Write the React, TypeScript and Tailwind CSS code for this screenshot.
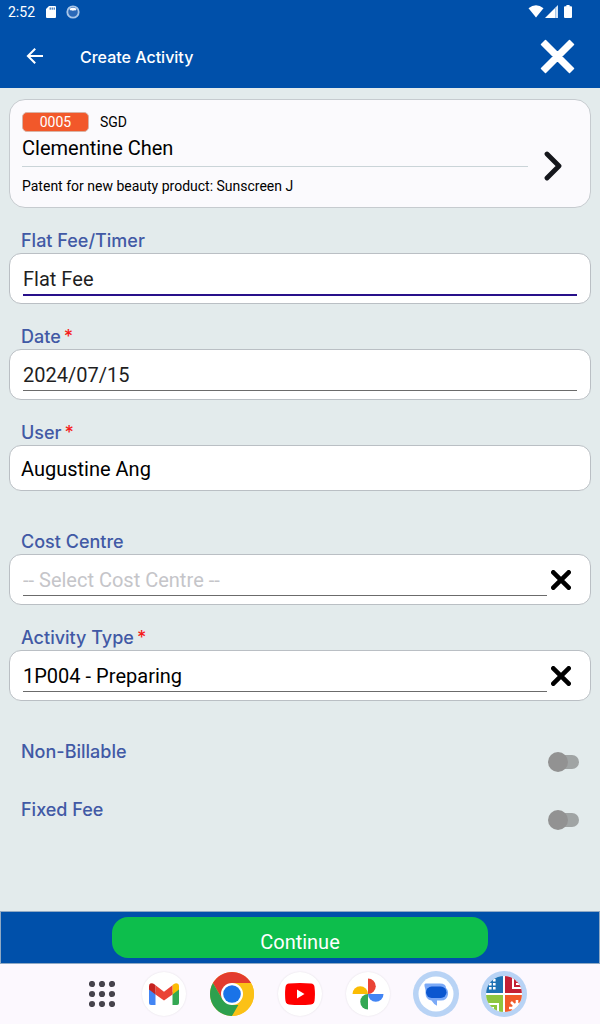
import React, { useState } from "react";

const labelText = "font-['Inter'] text-lg leading-6 font-medium text-[#4159a5]";
const fieldText = "font-['Roboto'] text-xl leading-6";

function Cross({ className }: { className: string }) {
  return (
    <svg viewBox="0 0 20 20" className={className} aria-hidden="true">
      <path d="M2.3 2.3 17.7 17.7M17.7 2.3 2.3 17.7" stroke="currentColor" strokeWidth="4.6" strokeLinecap="round" fill="none" />
    </svg>
  );
}

function StatusBar() {
  return (
    <div className="flex h-6 items-center px-2 text-white">
      <span className="text-sm leading-6">2:52</span>
      <svg viewBox="0 0 10 12" className="ml-[11px] h-3 w-[10px]" aria-hidden="true">
        <path d="M3 0H9Q10 0 10 1V11Q10 12 9 12H1Q0 12 0 11V3Z" fill="#fff" />
        <path d="M4.2 1.5v2.2M6.2 1.5v2.2M8.2 1.5v2.2" stroke="#0050aa" strokeWidth="1" />
      </svg>
      <svg viewBox="0 0 14 14" className="ml-[10px] size-[14px]" aria-hidden="true">
        <circle cx="7" cy="7" r="5.7" fill="#2b69b8" stroke="#a9c6e8" strokeWidth="1.8" />
        <path d="M3.4 3.7Q7 1.6 10.6 3.7Q10 6 8.5 5.2Q7 6 5.5 5.3Q4 5.8 3.4 3.7Z" fill="#fff" />
      </svg>
      <div className="ml-auto flex items-center pr-5 pb-[2px]">
        <svg viewBox="0 0 16 13" className="h-[13px] w-4" aria-hidden="true">
          <path d="M.5 3.2Q8-2.6 15.5 3.2L8 12.6Z" fill="#fff" />
        </svg>
        <svg viewBox="0 0 13 13" className="ml-px h-[13px] w-[13px]" aria-hidden="true">
          <path d="M0 13 10.5 2.5V13Z" fill="#fff" />
          <path d="M10.5 2.5 13 0V13H10.5Z" fill="#d5e5f6" />
        </svg>
        <svg viewBox="0 0 8 13" className="ml-[6px] h-[13px] w-2" aria-hidden="true">
          <path d="M2.4 0h3.2v1.2H7q1 0 1 1V12q0 1-1 1H1q-1 0-1-1V2.2q0-1 1-1h1.4Z" fill="#fff" />
        </svg>
      </div>
    </div>
  );
}

function FieldLabel({ htmlFor, children, required }: { htmlFor: string; children: React.ReactNode; required?: boolean }) {
  return (
    <label htmlFor={htmlFor} className={`block h-6 pl-3 ${labelText}`}>
      {children}
      {required && <span className="ml-[3px] text-[#f51b1b]">*</span>}
    </label>
  );
}

function Field(props: {
  id: string;
  label: string;
  value: string;
  required?: boolean;
  active?: boolean;
  clearable?: boolean;
  placeholder?: string;
  color?: string;
}) {
  const [value, setValue] = useState(props.value);
  return (
    <div>
      <FieldLabel htmlFor={props.id} required={props.required}>{props.label}</FieldLabel>
      <div className="flex h-[51px] rounded-xl border border-[#babfc4] bg-white px-[13px] pt-1">
        <input
          id={props.id}
          value={value}
          placeholder={props.placeholder}
          onChange={(e) => setValue(e.target.value)}
          className={`min-w-0 flex-1 pt-[6px] outline-none [font-kerning:none] placeholder:text-[#c5c5c9] ${fieldText} ${props.color ?? "text-black"} ${
            props.active ? "h-[38px] border-b-2 border-[#28108a]" : "h-[37px] border-b border-[#6b6b6b]"
          }`}
        />
        {props.clearable && (
          <button type="button" aria-label={`Clear ${props.label}`} onClick={() => setValue("")} className="mt-[11px] ml-1 mr-[6px] size-5">
            <Cross className="size-5" />
          </button>
        )}
      </div>
    </div>
  );
}

function Toggle({ id, label }: { id: string; label: string }) {
  return (
    <div className="flex h-[58px] items-start justify-between pl-3 pr-3">
      <label htmlFor={id} className={labelText}>{label}</label>
      <span className="relative mt-3 flex h-5 w-[31px] items-center">
        <input id={id} type="checkbox" role="switch" className="peer absolute inset-0 z-10 m-0 cursor-pointer opacity-0" />
        <span className="ml-2 h-[14px] flex-1 rounded-full bg-[#a0a4a4] peer-checked:bg-[#7ca7d8]" />
        <span className="absolute left-0 top-0 size-5 rounded-full bg-[#929292] peer-checked:left-[11px] peer-checked:bg-[#0050aa]" />
      </span>
    </div>
  );
}

const tile = "flex size-11 items-center justify-center rounded-full";

function Dock() {
  return (
    <nav aria-label="Apps" className="flex h-[60px] items-center justify-center gap-6 bg-[#fcf8fe] pl-3">
      <button type="button" aria-label="All apps" className="flex h-11 w-8 items-center justify-center">
        <svg viewBox="0 0 26 26" className="size-[26px]" fill="#46434c">
          {[3, 13, 23].map((y) => [3, 13, 23].map((x) => <circle key={`${x}-${y}`} cx={x} cy={y} r="3.1" />))}
        </svg>
      </button>
      <button type="button" aria-label="Gmail" className={`${tile} bg-white shadow-[0_0_2px_#0000001c]`}>
        <svg viewBox="0 0 30 22" className="h-[22px] w-[30px]">
          <path d="M0 5 6.5 9V22H2Q0 22 0 20Z" fill="#4285f4" />
          <path d="M30 5 23.5 9V22H28Q30 22 30 20Z" fill="#34a853" />
          <path d="M23.5 2 25 1Q27-.6 29 .8 30 1.7 30 3.2V6.5L23.5 11.5Z" fill="#fbbc04" />
          <path d="M6.5 2.2 15 8.7 23.5 2.2V11.5L15 17.5 6.5 11.5Z" fill="#ea4335" />
          <path d="M0 3.2Q0 1.4 1.3.6 3.2-.5 5 1L6.5 2.2V11.5L0 6.5Z" fill="#c5221f" />
        </svg>
      </button>
      <button type="button" aria-label="Chrome" className={tile}>
        <svg viewBox="0 0 44 44" className="size-11">
          <circle cx="22" cy="22" r="22" fill="#fbc116" />
          <path d="M22 22 12.5 27.5 2.95 11A22 22 0 0 1 41.05 11H22Z" fill="#e33b2e" />
          <path d="M2.95 11 12.5 27.5 22 33H31.5L22 44A22 22 0 0 1 2.95 11Z" fill="#2da04e" />
          <path d="M31.5 27.5 22 44A22 22 0 0 0 41.05 11H22Z" fill="#fbc116" />
          <circle cx="22" cy="22" r="11" fill="#fff" />
          <circle cx="22" cy="22" r="8.8" fill="#1a73e8" />
        </svg>
      </button>
      <button type="button" aria-label="YouTube" className={`${tile} bg-white shadow-[0_0_2px_#0000001c]`}>
        <svg viewBox="0 0 30 22" className="h-[22px] w-[30px]">
          <path d="M4 .6Q15-.5 26 .6 29 1 29.5 4 30.4 11 29.5 18 29 21 26 21.4 15 22.5 4 21.4 1 21 .5 18-.4 11 .5 4 1 1 4 .6Z" fill="#f00" />
          <path d="M12 6.5 19.5 11 12 15.5Z" fill="#fff" />
        </svg>
      </button>
      <button type="button" aria-label="Photos" className={`${tile} bg-white shadow-[0_0_2px_#0000001c]`}>
        <svg viewBox="0 0 32 32" className="size-8">
          <path d="M16 .5A7.75 7.75 0 0 1 16 16Z" fill="#ea4335" />
          <path d="M31.5 16A7.75 7.75 0 0 1 16 16Z" fill="#4285f4" />
          <path d="M16 31.5A7.75 7.75 0 0 1 16 16Z" fill="#34a853" />
          <path d="M.5 16A7.75 7.75 0 0 1 16 16Z" fill="#fbbc04" />
        </svg>
      </button>
      <button type="button" aria-label="Messages" className={tile}>
        <svg viewBox="0 0 46 46" className="size-[46px] shrink-0">
          <circle cx="23" cy="23" r="23" fill="#b8d3f5" />
          <circle cx="23" cy="23" r="17.5" fill="#fff" />
          <path d="M12.500 12.500H27Q33 12.500 33 17Q35.500 19 35 23.500Q34 29.500 28 29.500H24V34.800Q20.500 33 18.500 29.500Q12.500 28.500 12.500 22V19L11.500 15Q11 12.500 12.500 12.500Z" fill="#7baaf7" />
          <rect x="13" y="15.500" width="20.500" height="11.500" rx="5.700" fill="#0b57d0" />
        </svg>
      </button>
      <button type="button" aria-label="Practice manager" className={tile}>
        <svg viewBox="0 0 46 46" className="size-[46px] shrink-0">
          <defs><clipPath id="appDisc"><circle cx="23" cy="23" r="18" /></clipPath></defs>
          <circle cx="23" cy="23" r="23" fill="#b8d3f5" />
          <g clipPath="url(#appDisc)">
            <path d="M5 5H41V41H5Z" fill="#fff" />
            <path d="M5 5H22V22H5Z" fill="#1d72b4" />
            <path d="M24 5H41V22H24Z" fill="#c32034" />
            <path d="M5 24H22V41H5Z" fill="#8dc63f" />
            <path d="M24 24H41V41H24Z" fill="#f15a29" />
            <path d="M8 12h2.600v2.600h-2.600zM12 8h2.600v2.600h-2.600zM12 12h2.600v2.600h-2.600zM8 16h2.600v2.600h-2.600zM12 16h2.600v2.600h-2.600z" fill="#fff" />
            <path d="M32 7V17H41M35 9.500h5M35 13h5" stroke="#fff" strokeWidth="2" fill="none" />
            <path d="M7 33H17V41M9 37H12V41" stroke="#fff" strokeWidth="2" fill="none" />
            <circle cx="36" cy="37" r="5" fill="#fff" />
            <path d="M36 29V41M28 37H41M30 31 41 42M41 31 30 42" stroke="#fff" strokeWidth="2.600" fill="none" />
          </g>
        </svg>
      </button>
    </nav>
  );
}

export default function App() {
  return (
    <div className="flex min-h-screen flex-col bg-[#e3ebec] font-['Roboto',sans-serif] text-black">
      <header className="bg-[#0050aa] text-white">
        <StatusBar />
        <div className="flex h-16 items-center px-[25px]">
          <button type="button" aria-label="Back" className="size-5">
            <svg viewBox="0 0 20 20" className="size-5" fill="none" stroke="#fff" strokeWidth="2">
              <path d="M18 10H3M10.2 2.7 2.9 10l7.3 7.3" />
            </svg>
          </button>
          <h1 className="ml-[35px] pt-[2px] font-['Inter'] text-base leading-6 font-medium">Create Activity</h1>
          <button type="button" aria-label="Close" className="ml-auto size-[35px]">
            <svg viewBox="0 0 35 35" className="size-[35px]">
              <path d="M5.500 1.500 17.500 13.500 29.500 1.500 33.500 5.500 21.500 17.500 33.500 29.500 29.500 33.500 17.500 21.500 5.500 33.500 1.500 29.500 13.500 17.500 1.500 5.500Z" fill="#fff" stroke="#fff" strokeWidth="1.500" strokeLinejoin="round" />
            </svg>
          </button>
        </div>
      </header>

      <main className="flex-1 px-[9px] pt-[11px]">
        <section className="flex h-[109px] items-center rounded-2xl border border-[#c6cbcf] bg-[#fbfafd] pl-3 pr-[26px]">
          <div className="flex-1">
            <div className="flex h-5 items-center text-sm leading-5">
              <span className="w-[67px] rounded-[5px] border border-[#d9b3a5] bg-[#f2582a] text-center leading-[18px] text-white">0005</span>
              <span className="ml-[11px]">SGD</span>
            </div>
            <h2 className="pt-1 text-xl leading-6">Clementine Chen</h2>
            <p className="mt-[6px] border-t border-[#cad4d8] pt-[9px] text-sm leading-5">Patent for new beauty product: Sunscreen J</p>
          </div>
          <button type="button" aria-label="Open matter" className="mt-6 ml-4 h-[30px] w-5">
            <svg viewBox="0 0 20 30" className="h-[30px] w-5">
              <path d="M3 3 15 15 3 27" stroke="#15171c" strokeWidth="4.800" strokeLinecap="round" strokeLinejoin="round" fill="none" />
            </svg>
          </button>
        </section>

        <form className="flex flex-col pt-[21px]">
          <div className="flex flex-col gap-[21px]">
            <Field id="fee" label="Flat Fee/Timer" value="Flat Fee" active color="text-[#1f1f1f]" />
            <Field id="date" label="Date" value="2024/07/15" required color="text-[#1f1f1f]" />
            <div>
              <FieldLabel htmlFor="user" required>User</FieldLabel>
              <input id="user" defaultValue="Augustine Ang" className={`block h-[46px] w-full rounded-xl border border-[#babfc4] bg-white px-[11px] pt-[2px] outline-none ${fieldText}`} />
            </div>
          </div>
          <div className="flex flex-col gap-[21px] pt-[39px]">
            <Field id="cost" label="Cost Centre" value="" placeholder="-- Select Cost Centre --" clearable />
            <Field id="type" label="Activity Type" value="1P004 - Preparing" required clearable />
          </div>
          <div className="pt-[39px]">
            <Toggle id="nonbillable" label="Non-Billable" />
            <Toggle id="fixedfee" label="Fixed Fee" />
          </div>
        </form>
      </main>

      <footer>
        <div className="flex h-[53px] justify-center border border-[#8fa9c4] bg-[#0050aa] pt-[5px]">
          <button type="button" className="flex h-[41px] w-[63%] justify-center rounded-2xl bg-[#0dbe4c] pt-[13px] text-xl leading-6 text-white">
            Continue
          </button>
        </div>
        <Dock />
      </footer>
    </div>
  );
}
